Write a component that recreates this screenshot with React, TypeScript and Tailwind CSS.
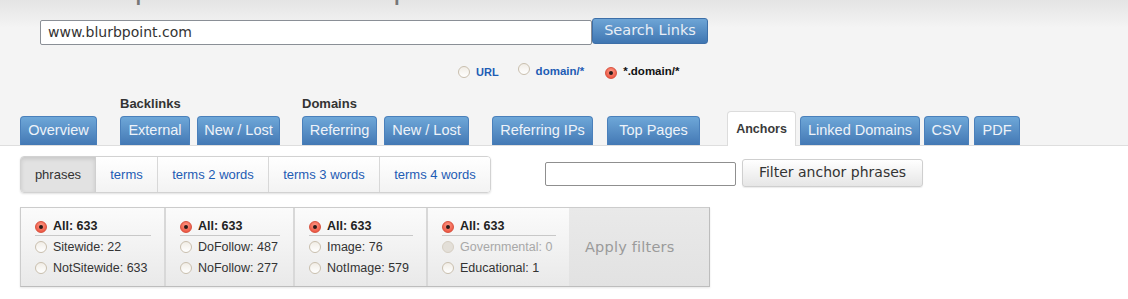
import React from "react";

const SANS = "font-['Liberation_Sans',Arial,sans-serif]";
const DEJA = "font-['DejaVu_Sans',Verdana,sans-serif]";

function Radio({ state }: { state: "on" | "off" | "disabled" }) {
  if (state === "on") {
    return (
      <span className="inline-flex items-center justify-center w-[12px] h-[12px] rounded-full bg-[radial-gradient(circle_at_50%_35%,#ff9a88,#e8442f)] border border-[#d8513e] shrink-0">
        <span className="w-[4px] h-[4px] rounded-full bg-[#2a1a18]" />
      </span>
    );
  }
  if (state === "disabled") {
    return <span className="inline-block w-[12px] h-[12px] rounded-full bg-[#e3dfd8] border border-[#d6cfc3] shrink-0" />;
  }
  return (
    <span className="inline-block w-[12px] h-[12px] rounded-full bg-[linear-gradient(#f1ede6,#ffffff)] border border-[#c9bfae] shrink-0" />
  );
}

function Tab({ label, w, ml }: { label: string; w: string; ml: string }) {
  return (
    <div
      className={`${w} ${ml} h-[29px] rounded-t-[4px] bg-[linear-gradient(#6ea7d8,#4378b4)] border border-[#4a80bb] border-b-0 flex items-center justify-center text-[14.5px] text-[#eef3f9] ${SANS}`}
    >
      {label}
    </div>
  );
}

function FilterBox({
  w,
  rows,
}: {
  w: string;
  rows: { label: string; state: "on" | "off" | "disabled" }[];
}) {
  return (
    <div className={`${w} h-full pl-[14px] pr-[13px] pt-[10px] border-r-2 border-[#d8d8d8] ${SANS}`}>
      <div className="flex items-center gap-[6px] h-[18px] border-b border-[#c8c8c8] text-[12.5px] font-bold text-[#222]">
        <Radio state={rows[0].state} />
        <span>{rows[0].label}</span>
      </div>
      {rows.slice(1).map((r) => (
        <div
          key={r.label}
          className={`flex items-center gap-[6px] h-[20px] mt-[1px] text-[12.5px] ${r.state === "disabled" ? "text-[#a8a8a8]" : "text-[#333]"}`}
        >
          <Radio state={r.state} />
          <span>{r.label}</span>
        </div>
      ))}
    </div>
  );
}

export default function App() {
  return (
    <div className="w-[1128px] min-h-[299px] bg-white">
      {/* Header */}
      <div className="flow-root bg-[linear-gradient(#e4e4e4,#f4f4f4_28px,#f4f4f4)] border-b border-[#dedede]">
        <div className={`-mt-[26px] h-[30px] ml-[40px] text-[30px] leading-[30px] text-[#777] whitespace-nowrap ${SANS}`}>
          Site Explorer - Anchors Report
        </div>

        <div className="mt-[14px] ml-[40px] flex items-start">
          <div className={`mt-[2px] w-[552px] h-[25px] bg-white border border-[#8a8f96] rounded-[2px] flex items-center pl-[7px] text-[14px] text-[#333] ${DEJA}`}>
            www.blurbpoint.com
          </div>
          <div className={`w-[116px] h-[26px] rounded-[3px] bg-[linear-gradient(#6ea5d6,#3f76b2)] border border-[#3d6fa8] flex items-center justify-center text-[14.5px] text-[#e8eef6] ${DEJA}`}>
            Search Links
          </div>
        </div>

        <div className={`mt-[19px] ml-[458px] h-[16px] flex items-center text-[11.5px] font-bold ${SANS}`}>
          <Radio state="off" />
          <span className="ml-[6px] text-[#1d5cb4] text-[11px]">URL</span>
          <span className="ml-[19px]"><Radio state="off" /></span>
          <span className="ml-[6px] text-[#1d5cb4]">domain/*</span>
          <span className="ml-[21px]"><Radio state="on" /></span>
          <span className="ml-[6px] text-[#111]">*.domain/*</span>
        </div>

        <div className="mt-[16px] flex items-end">
          <Tab label="Overview" w="w-[77px]" ml="ml-[20px]" />
          <div className="ml-[23px] flex flex-col">
            <div className={`h-[16px] mb-[4px] text-[13px] font-bold text-[#333] leading-[16px] ${SANS}`}>Backlinks</div>
            <div className="flex">
              <Tab label="External" w="w-[70px]" ml="ml-0" />
              <Tab label="New / Lost" w="w-[83px]" ml="ml-[7px]" />
            </div>
          </div>
          <div className="ml-[22px] flex flex-col">
            <div className={`h-[16px] mb-[4px] text-[13px] font-bold text-[#333] leading-[16px] ${SANS}`}>Domains</div>
            <div className="flex">
              <Tab label="Referring" w="w-[75px]" ml="ml-0" />
              <Tab label="New / Lost" w="w-[85px]" ml="ml-[7px]" />
            </div>
          </div>
          <Tab label="Referring IPs" w="w-[101px]" ml="ml-[23px]" />
          <Tab label="Top Pages" w="w-[93px]" ml="ml-[14px]" />
          <div
            className={`ml-[27px] w-[69px] h-[35px] -mb-px relative z-10 bg-white border border-[#dcdcdc] border-b-0 rounded-t-[4px] flex items-center justify-center text-[12.5px] font-bold text-[#3a3a3a] ${SANS}`}
          >
            Anchors
          </div>
          <Tab label="Linked Domains" w="w-[120px]" ml="ml-[4px]" />
          <Tab label="CSV" w="w-[45px]" ml="ml-[4px]" />
          <Tab label="PDF" w="w-[46px]" ml="ml-[5px]" />
        </div>
      </div>

      {/* Content */}
      <div className="mt-[10px] ml-[20px] flex items-center">
        <div className={`flex h-[37px] border border-[#d2d2d2] rounded-[4px] overflow-hidden shadow-[0_1px_2px_rgba(0,0,0,0.12)] text-[13px] ${SANS}`}>
          <div className="w-[75px] flex items-center justify-center bg-[#e2e2e2] shadow-[inset_0_2px_4px_rgba(0,0,0,0.12)] text-[#333] border-r border-[#d0d0d0]">
            phrases
          </div>
          <div className="w-[62px] flex items-center justify-center bg-[linear-gradient(#ffffff,#f3f3f3)] text-[#1d5cb4] border-r border-[#d8d8d8]">
            terms
          </div>
          <div className="w-[111px] flex items-center justify-center bg-[linear-gradient(#ffffff,#f3f3f3)] text-[#1d5cb4] border-r border-[#d8d8d8]">
            terms 2 words
          </div>
          <div className="w-[111px] flex items-center justify-center bg-[linear-gradient(#ffffff,#f3f3f3)] text-[#1d5cb4] border-r border-[#d8d8d8]">
            terms 3 words
          </div>
          <div className="w-[110px] flex items-center justify-center bg-[linear-gradient(#ffffff,#f3f3f3)] text-[#1d5cb4]">
            terms 4 words
          </div>
        </div>

        <div className="ml-[54px] mt-[-2px] w-[191px] h-[24px] bg-white border border-[#8f8f8f] rounded-[2px]" />
        <div className={`ml-[6px] mt-[-4px] w-[181px] h-[28px] rounded-[3px] border border-[#cfcfcf] bg-[linear-gradient(#ffffff,#e6e6e6)] shadow-[0_1px_1px_rgba(0,0,0,0.08)] flex items-center justify-center text-[14px] text-[#333] ${DEJA}`}>
          Filter anchor phrases
        </div>
      </div>

      <div className="mt-[14px] ml-[20px] w-[690px] h-[80px] flex border border-[#cccccc] border-r-[#bdbdbd] border-b-[#bdbdbd] shadow-[0_1px_2px_rgba(0,0,0,0.1)] bg-[linear-gradient(#fbfbfb,#e9e9e9)]">
        <FilterBox
          w="w-[145px]"
          rows={[
            { label: "All: 633", state: "on" },
            { label: "Sitewide: 22", state: "off" },
            { label: "NotSitewide: 633", state: "off" },
          ]}
        />
        <FilterBox
          w="w-[129px]"
          rows={[
            { label: "All: 633", state: "on" },
            { label: "DoFollow: 487", state: "off" },
            { label: "NoFollow: 277", state: "off" },
          ]}
        />
        <FilterBox
          w="w-[133px]"
          rows={[
            { label: "All: 633", state: "on" },
            { label: "Image: 76", state: "off" },
            { label: "NotImage: 579", state: "off" },
          ]}
        />
        <div className="w-[141px] h-full">
          <FilterBox
            w="w-[141px] !border-r-0"
            rows={[
              { label: "All: 633", state: "on" },
              { label: "Governmental: 0", state: "disabled" },
              { label: "Educational: 1", state: "off" },
            ]}
          />
        </div>
        <div className={`flex-1 h-full bg-[linear-gradient(#e9e9e9,#e2e2e2)] flex items-center pl-[16px] pt-[2px] text-[14.5px] tracking-[0.2px] text-[#9a9a9a] ${DEJA}`}>
          Apply filters
        </div>
      </div>
    </div>
  );
}
